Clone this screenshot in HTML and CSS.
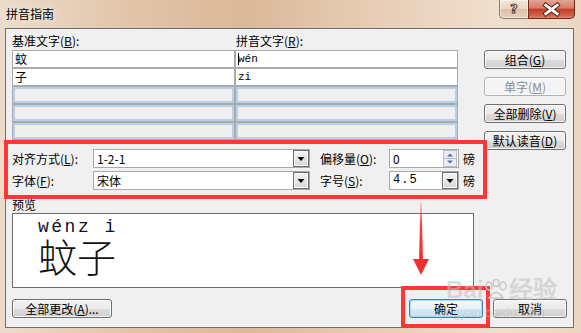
FILE: index.html
```html
<!DOCTYPE html>
<html lang="zh-CN">

<head>
    <meta charset="UTF-8">
    <title>拼音指南</title>
    <link rel="stylesheet" href="styles.css">
</head>

<body>
    <div class="window">
        <div class="titlebar">
            <span class="title">拼音指南</span>
            <div class="caption">
                <span class="cap-help">?</span>
                <span class="cap-close">
                    <svg width="47" height="19" viewBox="0 0 47 19">
                        <path d="M17.5 5 L29.5 14 M29.5 5 L17.5 14" stroke="#5a2418" stroke-width="5" stroke-linecap="square"/>
                        <path d="M17.5 5 L29.5 14 M29.5 5 L17.5 14" stroke="#ffffff" stroke-width="3" stroke-linecap="square"/>
                    </svg>
                </span>
            </div>
        </div>

        <div class="client">
            <div class="top">
                <div class="pairs">
                    <div class="pair-labels">
                        <span>基准文字(<u>B</u>):</span>
                        <span>拼音文字(<u>R</u>):</span>
                    </div>
                    <div class="pair-grid">
                        <div class="cell filled">蚊</div>
                        <div class="cell filled mono"><span class="caret"></span>wén</div>
                        <div class="cell filled">子</div>
                        <div class="cell filled mono">zi</div>
                        <div class="cell empty"></div>
                        <div class="cell empty"></div>
                        <div class="cell empty"></div>
                        <div class="cell empty"></div>
                        <div class="cell empty"></div>
                        <div class="cell empty"></div>
                    </div>
                </div>
                <div class="side">
                    <span class="btn">组合(<u>G</u>)</span>
                    <span class="btn disabled">单字(<u>M</u>)</span>
                    <span class="btn">全部删除(<u>V</u>)</span>
                    <span class="btn">默认读音(<u>D</u>)</span>
                </div>
            </div>

            <div class="options">
                <span class="opt-label">对齐方式(<u>L</u>):</span>
                <div class="combo">
                    <span class="combo-text">1-2-1</span>
                    <span class="drop">
                        <svg width="14" height="15" viewBox="0 0 14 15"><path d="M3.5 6 H10.5 L7 10 Z" fill="#000"/></svg>
                    </span>
                </div>
                <span class="opt-label second">偏移量(<u>O</u>):</span>
                <div class="combo">
                    <span class="combo-text">0</span>
                    <span class="spin">
                        <svg width="14" height="17" viewBox="0 0 14 17">
                            <rect x="0.5" y="0.5" width="13" height="16" fill="#e9edf3" stroke="#b9bdc4"/>
                            <line x1="1" y1="8.5" x2="13" y2="8.5" stroke="#b9bdc4"/>
                            <path d="M4 6.5 H10 L7 3.5 Z" fill="#5a6f9c"/>
                            <path d="M4 10.5 H10 L7 13.5 Z" fill="#5a6f9c"/>
                        </svg>
                    </span>
                </div>
                <span class="unit">磅</span>

                <span class="opt-label">字体(<u>F</u>):</span>
                <div class="combo">
                    <span class="combo-text">宋体</span>
                    <span class="drop">
                        <svg width="14" height="15" viewBox="0 0 14 15"><path d="M3.5 6 H10.5 L7 10 Z" fill="#000"/></svg>
                    </span>
                </div>
                <span class="opt-label second">字号(<u>S</u>):</span>
                <div class="combo">
                    <span class="combo-text mono-num">4.5</span>
                    <span class="drop">
                        <svg width="14" height="15" viewBox="0 0 14 15"><path d="M3.5 6 H10.5 L7 10 Z" fill="#000"/></svg>
                    </span>
                </div>
                <span class="unit">磅</span>
            </div>

            <div class="preview-label">预览</div>
            <div class="preview">
                <div class="pinyin">wénz i</div>
                <div class="hanzi">蚊子</div>
            </div>

            <div class="bottom">
                <span class="btn wide">全部更改(<u>A</u>)...</span>
                <span class="btn default">确定</span>
                <span class="btn cancel">取消</span>
            </div>
        </div>
    </div>

    <!-- annotations drawn over the screenshot -->
    <div class="mark mark-options"></div>
    <div class="mark mark-ok"></div>
    <svg class="arrow" width="20" height="76" viewBox="0 0 20 76">
        <defs>
            <linearGradient id="shaft" x1="0" y1="0" x2="0" y2="1">
                <stop offset="0" stop-color="#ff3b3b" stop-opacity="0.35"/>
                <stop offset="0.4" stop-color="#ff3b3b"/>
                <stop offset="1" stop-color="#f42f2f"/>
            </linearGradient>
        </defs>
        <path d="M9.5 0 L10.5 0 L12 58 L8 58 Z" fill="url(#shaft)"/>
        <path d="M2 57 L18 57 L10 73 Z" fill="#f42f2f"/>
    </svg>

    <div class="watermark">
        <div class="wm-logo">Bai<svg width="26" height="22" viewBox="0 0 26 22">
                <ellipse cx="6" cy="7" rx="3" ry="4" fill="none" stroke="#c8c8c8" stroke-width="1.5"/>
                <ellipse cx="13" cy="4" rx="3" ry="3.5" fill="none" stroke="#c8c8c8" stroke-width="1.5"/>
                <ellipse cx="20" cy="7" rx="3" ry="4" fill="none" stroke="#c8c8c8" stroke-width="1.5"/>
                <path d="M6 19 Q13 8 20 19 Z" fill="none" stroke="#c8c8c8" stroke-width="1.5"/>
            </svg>经验</div>
        <div class="wm-url">jingyan.baidu.com</div>
    </div>
</body>

</html>
```

FILE: styles.css
```css
body {
    margin: 0;
    width: 581px;
    height: 333px;
    overflow: hidden;
    position: relative;
    font-family: "Noto Sans CJK SC", sans-serif;
    font-size: 12px;
    color: #000;
    /* Aero frame, warm tint */
    background: linear-gradient(90deg, #ecdccb 0%, #e2c5a8 22%, #dbb898 42%, #e6cbb1 62%, #f0dfcd 85%, #ead6c2 100%);
}

u {
    text-decoration: underline;
    text-underline-offset: 1px;
}

.titlebar {
    height: 28px;
    display: flex;
    justify-content: space-between;
    align-items: flex-start;
}

.title {
    padding: 6px 0 0 6px;
    line-height: 16px;
    text-shadow: 0 0 6px rgba(255, 255, 255, 0.9);
}

.caption {
    display: flex;
    margin-right: 6px;
}

.cap-help {
    width: 29px;
    height: 19px;
    box-sizing: border-box;
    border: 1px solid #8d7a69;
    border-top: none;
    border-right: none;
    border-radius: 0 0 0 5px;
    background: linear-gradient(#f3e6d9 0%, #ead6c3 50%, #dcc0a6 52%, #e7cfb8 100%);
    box-shadow: inset 0 0 0 1px rgba(255, 255, 255, 0.5);
    display: flex;
    justify-content: center;
    font-family: "DejaVu Sans", sans-serif;
    font-weight: bold;
    font-size: 13px;
    line-height: 18px;
    color: #f6f1ea;
    -webkit-text-stroke: 1px #4a4038;
}

.cap-close {
    width: 47px;
    height: 19px;
    box-sizing: border-box;
    border: 1px solid #6e2a1f;
    border-top: none;
    border-radius: 0 0 5px 0;
    background: linear-gradient(#e6a594 0%, #d77a66 45%, #c23e29 52%, #d0604a 85%, #e08a6e 100%);
    display: flex;
}

.client {
    margin: 0 7px 0 5px;
    height: 300px;
    box-sizing: border-box;
    border: 1px solid #6f6f6f;
    background-color: #f0f0f0;
    padding: 5px 6px 0 6px;
}

/* the button column runs past the grid, so the row keeps the grid's height */
.top {
    display: flex;
    align-items: flex-start;
    height: 106px;
}

.pairs {
    width: 446px;
}

.pair-labels {
    display: grid;
    grid-template-columns: 224px 1fr;
    height: 16px;
    line-height: 14px;
}

.pair-grid {
    display: grid;
    grid-template-columns: 221px 221px;
    grid-auto-rows: 16px;
    gap: 2px;
    padding: 1px;
    background-color: #ababab;
}

.cell {
    line-height: 16px;
    padding-left: 2px;
}

.cell.filled {
    background-color: #fff;
}

.cell.empty {
    background-color: #efefef;
    box-shadow: inset 0 0 0 2px #b8cfe8;
}

.mono {
    font-family: "Liberation Mono", monospace;
    font-size: 11px;
    display: flex;
    align-items: center;
}

.caret {
    width: 1px;
    height: 12px;
    background-color: #000;
    margin-right: -1px;
}

.side {
    margin-left: 26px;
    width: 82px;
    padding-top: 16px;
    display: flex;
    flex-direction: column;
    gap: 8px;
    position: relative;
}

.btn {
    height: 19px;
    box-sizing: border-box;
    border: 1px solid #707070;
    border-radius: 3px;
    background: linear-gradient(#f2f2f2 0%, #ebebeb 50%, #dddddd 51%, #cfcfcf 100%);
    box-shadow: inset 0 0 0 1px rgba(255, 255, 255, 0.75);
    display: flex;
    justify-content: center;
    align-items: center;
    line-height: 17px;
}

.btn.disabled {
    border-color: #adb2b5;
    background: #f4f4f4;
    color: #8d8d8d;
}

.options {
    margin-top: 9px;
    display: grid;
    grid-template-columns: 81px 217px 79px 70px auto;
    grid-auto-rows: 19px;
    row-gap: 3px;
    align-items: center;
}

.opt-label.second {
    padding-left: 10px;
}

.combo {
    height: 19px;
    box-sizing: border-box;
    border: 1px solid #a9a9a9;
    background-color: #fff;
    display: flex;
    align-items: center;
}

.combo-text {
    flex: 1;
    padding-left: 3px;
    line-height: 17px;
}

.mono-num {
    font-family: "Liberation Mono", monospace;
    letter-spacing: 1px;
}

.drop {
    width: 16px;
    height: 17px;
    box-sizing: border-box;
    border: 1px solid #6c6c6c;
    background: linear-gradient(#f4f4f4, #d6d6d6);
    box-shadow: inset 0 0 0 1px #fbfbfb;
    display: flex;
}

.spin {
    display: flex;
    margin-right: 1px;
}

.unit {
    padding-left: 4px;
}

.preview-label {
    margin-top: 8px;
    line-height: 14px;
}

.preview {
    margin-top: 1px;
    width: 462px;
    height: 75px;
    box-sizing: border-box;
    border: 1px solid #6e6e6e;
    background-color: #fff;
    padding: 4px 0 0 25px;
}

.pinyin {
    font-family: "Liberation Mono", monospace;
    font-size: 18px;
    line-height: 18px;
    letter-spacing: 2.5px;
    color: #101030;
}

.hanzi {
    font-size: 39px;
    font-weight: 300;
    line-height: 38px;
    letter-spacing: 0;
    color: #111;
}

.bottom {
    margin-top: 11px;
    display: flex;
}

.btn.wide {
    width: 100px;
}

.btn.default {
    width: 74px;
    margin-left: auto;
    border-color: #3c7fb1;
    box-shadow: inset 0 0 0 1px #a6dcf5;
    background: linear-gradient(#f3f9fd 0%, #e6f2fa 50%, #d5e8f5 51%, #c9e1f2 100%);
}

.btn.cancel {
    width: 74px;
    margin-left: 10px;
}

.mark {
    position: absolute;
    box-sizing: border-box;
    border: 4px solid #ff3636;
}

.mark-options {
    left: 4px;
    top: 140px;
    width: 483px;
    height: 59px;
}

.mark-ok {
    left: 401px;
    top: 286px;
    width: 89px;
    height: 42px;
}

.arrow {
    position: absolute;
    left: 411px;
    top: 202px;
}

.watermark {
    position: absolute;
    left: 446px;
    top: 278px;
    color: rgba(190, 190, 190, 0.55);
    pointer-events: none;
}

.wm-logo {
    font-family: "Liberation Sans", sans-serif;
    font-weight: bold;
    font-size: 24px;
    line-height: 24px;
    display: flex;
    align-items: center;
}

.wm-url {
    font-family: "Liberation Sans", sans-serif;
    font-size: 13px;
    line-height: 14px;
    margin: 4px 0 0 -6px;
}
```
